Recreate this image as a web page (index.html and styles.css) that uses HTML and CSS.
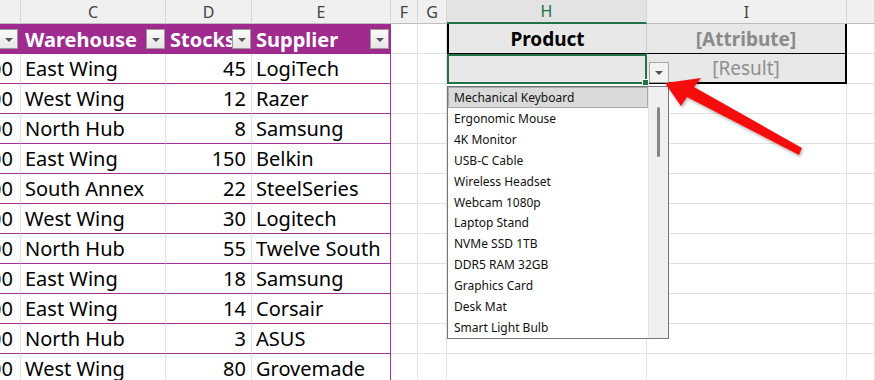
FILE: index.html
```html
<!DOCTYPE html>
<html>
<head>
<meta charset="utf-8">
<link rel="stylesheet" href="styles.css">
</head>
<body>
<div class="page">
  <div class="sheet">
    <div class="c ch"></div><div class="c ch">C</div><div class="c ch">D</div><div class="c ch">E</div><div class="c ch">F</div><div class="c ch">G</div><div class="c ch ch-sel">H</div><div class="c ch">I</div><div class="c ch"></div>

    <div class="c th thb"><span class="fb"></span></div>
    <div class="c th"><span class="tt">Warehouse</span><span class="fb"></span></div>
    <div class="c th"><span class="tt">Stocks</span><span class="fb"></span></div>
    <div class="c th te"><span class="tt">Supplier</span><span class="fb"></span></div>
    <div class="c"></div><div class="c"></div>
    <div class="c ph ph-h">Product</div>
    <div class="c ph ph-i">[Attribute]</div>
    <div class="c"></div>

    <div class="c td tb"><span>$1,200</span></div><div class="c td">East Wing</div><div class="c td num">45</div><div class="c td te">LogiTech</div>
    <div class="c"></div><div class="c"></div><div class="c pv pv-h"><span class="handle"></span></div><div class="c pv pv-i">[Result]</div><div class="c"></div>

    <div class="c td tb"><span>$1,200</span></div><div class="c td">West Wing</div><div class="c td num">12</div><div class="c td te">Razer</div>
    <div class="c"></div><div class="c"></div><div class="c"></div><div class="c"></div><div class="c"></div>

    <div class="c td tb"><span>$1,200</span></div><div class="c td">North Hub</div><div class="c td num">8</div><div class="c td te">Samsung</div>
    <div class="c"></div><div class="c"></div><div class="c"></div><div class="c"></div><div class="c"></div>

    <div class="c td tb"><span>$1,200</span></div><div class="c td">East Wing</div><div class="c td num">150</div><div class="c td te">Belkin</div>
    <div class="c"></div><div class="c"></div><div class="c"></div><div class="c"></div><div class="c"></div>

    <div class="c td tb"><span>$1,200</span></div><div class="c td">South Annex</div><div class="c td num">22</div><div class="c td te">SteelSeries</div>
    <div class="c"></div><div class="c"></div><div class="c"></div><div class="c"></div><div class="c"></div>

    <div class="c td tb"><span>$1,200</span></div><div class="c td">West Wing</div><div class="c td num">30</div><div class="c td te">Logitech</div>
    <div class="c"></div><div class="c"></div><div class="c"></div><div class="c"></div><div class="c"></div>

    <div class="c td tb"><span>$1,200</span></div><div class="c td">North Hub</div><div class="c td num">55</div><div class="c td te">Twelve South</div>
    <div class="c"></div><div class="c"></div><div class="c"></div><div class="c"></div><div class="c"></div>

    <div class="c td tb"><span>$1,200</span></div><div class="c td">East Wing</div><div class="c td num">18</div><div class="c td te">Samsung</div>
    <div class="c"></div><div class="c"></div><div class="c"></div><div class="c"></div><div class="c"></div>

    <div class="c td tb"><span>$1,200</span></div><div class="c td">East Wing</div><div class="c td num">14</div><div class="c td te">Corsair</div>
    <div class="c"></div><div class="c"></div><div class="c"></div><div class="c"></div><div class="c"></div>

    <div class="c td tb"><span>$1,200</span></div><div class="c td">North Hub</div><div class="c td num">3</div><div class="c td te">ASUS</div>
    <div class="c"></div><div class="c"></div><div class="c"></div><div class="c"></div><div class="c"></div>

    <div class="c td tb"><span>$1,200</span></div><div class="c td">West Wing</div><div class="c td num">80</div><div class="c td te">Grovemade</div>
    <div class="c"></div><div class="c"></div><div class="c"></div><div class="c"></div><div class="c"></div>
  </div>

  <div class="dd-btn"><span class="tri"></span></div>

  <div class="dd-list">
    <div class="dd-items">
      <div class="dd-item sel">Mechanical Keyboard</div>
      <div class="dd-item">Ergonomic Mouse</div>
      <div class="dd-item">4K Monitor</div>
      <div class="dd-item">USB-C Cable</div>
      <div class="dd-item">Wireless Headset</div>
      <div class="dd-item">Webcam 1080p</div>
      <div class="dd-item">Laptop Stand</div>
      <div class="dd-item">NVMe SSD 1TB</div>
      <div class="dd-item">DDR5 RAM 32GB</div>
      <div class="dd-item">Graphics Card</div>
      <div class="dd-item">Desk Mat</div>
      <div class="dd-item">Smart Light Bulb</div>
    </div>
    <div class="dd-scroll"><div class="thumb"></div></div>
  </div>

  <svg class="arrow" width="875" height="380" viewBox="0 0 875 380">
    <defs>
      <filter id="sh" x="-20%" y="-20%" width="140%" height="140%">
        <feDropShadow dx="1" dy="2" stdDeviation="1.5" flood-color="#000" flood-opacity="0.3"/>
      </filter>
    </defs>
    <polygon filter="url(#sh)" fill="#f50f0f" points="665,83 701,78 694,87 802,148 799,155 687,97 681,106"/>
  </svg>
</div>
</body>
</html>
```
FILE: styles.css
```css
html, body {
  margin: 0;
  padding: 0;
  background: #ffffff;
}
.page {
  position: relative;
  width: 875px;
  height: 380px;
  overflow: hidden;
  font-family: "Noto Sans", "Open Sans", sans-serif;
}
.sheet {
  display: grid;
  grid-template-columns: 21px 145px 86px 139px 27px 29px 200px 200px 28px;
  grid-template-rows: 24px;
  grid-auto-rows: 30px;
}
.c {
  box-sizing: border-box;
  border-right: 1px solid #e1e1e1;
  border-bottom: 1px solid #e1e1e1;
  display: flex;
  align-items: center;
  overflow: hidden;
  white-space: nowrap;
  min-width: 0;
}
.ch {
  background: #f0f0f0;
  border-right: 1px solid #d6d6d6;
  border-bottom: 1px solid #bdbdbd;
  justify-content: center;
  font-size: 16px;
  color: #444;
}
.ch-sel {
  background: #e3e3e3;
  color: #217346;
  border-bottom: 2px solid #217346;
}
.th {
  background: #9f2b8f;
  color: #ffffff;
  font-weight: bold;
  font-size: 20px;
  padding-left: 4px;
  border-right: none;
  border-bottom: none;
}
.thb {
  padding-left: 0;
}
.th .tt {
  flex: 1;
  min-width: 0;
  overflow: hidden;
}
.fb {
  flex-shrink: 0;
  width: 19px;
  height: 20px;
  box-sizing: border-box;
  border: 1px solid #9a9a9a;
  background: linear-gradient(#fafafa, #e6e6e6);
  margin-right: 1px;
  position: relative;
}
.thb .fb {
  margin-left: -1px;
}
.fb::after {
  content: "";
  position: absolute;
  left: 5px;
  top: 8px;
  border-left: 4px solid transparent;
  border-right: 4px solid transparent;
  border-top: 4px solid #555;
}
.th.te {
  border-right: 1px solid #9f2b8f;
}
.td {
  font-size: 20px;
  color: #000;
  padding-left: 4px;
  border-bottom: 1px solid #a3329a;
}
.td.te {
  border-right: 1px solid #a3329a;
}
.tb {
  justify-content: flex-end;
  padding-left: 0;
  padding-right: 7px;
}
.num {
  justify-content: flex-end;
  padding-right: 5px;
}
.ph {
  background: #e8e8e8;
  justify-content: center;
  font-weight: bold;
  font-size: 19px;
  border-bottom: 1px solid #000;
}
.ph-h {
  color: #000;
  border-left: 2px solid #000;
  border-right: 1px solid #d0d0d0;
}
.ph-i {
  color: #8a8a8a;
  border-right: 2px solid #000;
}
.pv {
  background: #e8e8e8;
  justify-content: center;
  font-size: 19px;
  border-bottom: 2px solid #000;
}
.pv-h {
  border: 2px solid #217346;
  position: relative;
  overflow: visible;
}
.handle {
  position: absolute;
  right: -4px;
  bottom: -4px;
  width: 5px;
  height: 5px;
  background: #217346;
  border: 1px solid #fff;
}
.pv-i {
  color: #8f8f8f;
  border-right: 2px solid #000;
}
.dd-btn {
  position: absolute;
  left: 649px;
  top: 62px;
  width: 20px;
  height: 21px;
  box-sizing: border-box;
  border: 1px solid #a6a6a6;
  background: #f3f3f3;
}
.dd-btn .tri {
  position: absolute;
  left: 5px;
  top: 8px;
  border-left: 4px solid transparent;
  border-right: 4px solid transparent;
  border-top: 4px solid #555;
}
.dd-list {
  position: absolute;
  left: 447px;
  top: 86px;
  width: 222px;
  height: 253px;
  box-sizing: border-box;
  border: 1px solid #767676;
  background: #fff;
  display: flex;
}
.dd-items {
  flex: 1;
  display: flex;
  flex-direction: column;
}
.dd-item {
  height: 21px;
  box-sizing: border-box;
  padding-left: 6px;
  font-size: 12px;
  color: #111;
  display: flex;
  align-items: center;
  white-space: nowrap;
}
.dd-item.sel {
  background: #dadada;
  border: 1px solid #a8a8a8;
  padding-left: 5px;
}
.dd-scroll {
  width: 20px;
  background: #f0f0f0;
  border-left: 1px solid #e6e6e6;
  display: flex;
  justify-content: center;
  padding-top: 20px;
  box-sizing: border-box;
}
.thumb {
  width: 3px;
  height: 50px;
  background: #858585;
  border-radius: 2px;
}
.arrow {
  position: absolute;
  left: 0;
  top: 0;
  pointer-events: none;
}
```
